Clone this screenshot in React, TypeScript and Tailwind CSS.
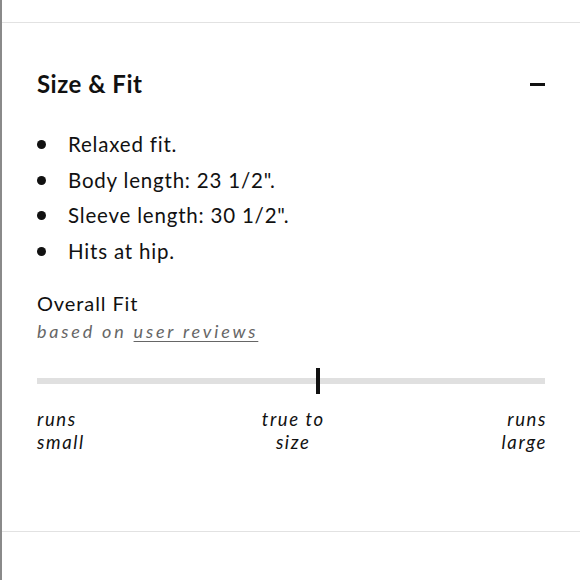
const bullets = ['Relaxed fit.', 'Body length: 23 1/2".', 'Sleeve length: 30 1/2".', 'Hits at hip.'];

export default function App() {
  return (
    <div className="w-[580px] h-[580px] bg-white border-l-2 border-[#8a8a8a] flex flex-col font-['Lato',sans-serif] text-[#111]">
      <div className="h-[22px] shrink-0" />
      <section className="border-t border-[#e2e2e2] pl-[35px] pr-[35px] pt-[44px] h-[509px] shrink-0">
        <div className="flex items-center justify-between h-[34px]">
          <h2 className="text-[24px] font-bold tracking-[0.5px]">Size &amp; Fit</h2>
          <span className="block w-[15px] h-[3px] bg-[#111]" />
        </div>

        <ul className="mt-[26px]">
          {bullets.map((b) => (
            <li key={b} className="flex items-center h-[35.5px] text-[20.5px] tracking-[0.8px]">
              <span className="w-[9px] h-[9px] rounded-full bg-[#111] shrink-0" />
              <span className="ml-[22px]">{b}</span>
            </li>
          ))}
        </ul>

        <div className="mt-[20px]">
          <div className="text-[20px] leading-[28px] tracking-[0.9px]">Overall Fit</div>
          <div className="text-[18px] leading-[28px] italic text-[#666] tracking-[2.8px]">
            based on <span className="underline underline-offset-[3px] decoration-1">user reviews</span>
          </div>
        </div>

        <div className="relative mt-[23px] h-[26px] flex items-center">
          <div className="w-full h-[6px] bg-[#e0e0e0]" />
          <div className="absolute left-[279px] top-0 w-[4px] h-[26px] bg-[#111]" />
        </div>

        <div className="flex justify-between mt-[14px] text-[18.5px] leading-[22.5px] italic tracking-[1.6px]">
          <div className="text-left">runs<br />small</div>
          <div className="text-center">true to<br />size</div>
          <div className="text-right mr-[-2px]">runs<br />large</div>
        </div>
      </section>
      <div className="border-t border-[#e2e2e2] flex-1" />
    </div>
  );
}
